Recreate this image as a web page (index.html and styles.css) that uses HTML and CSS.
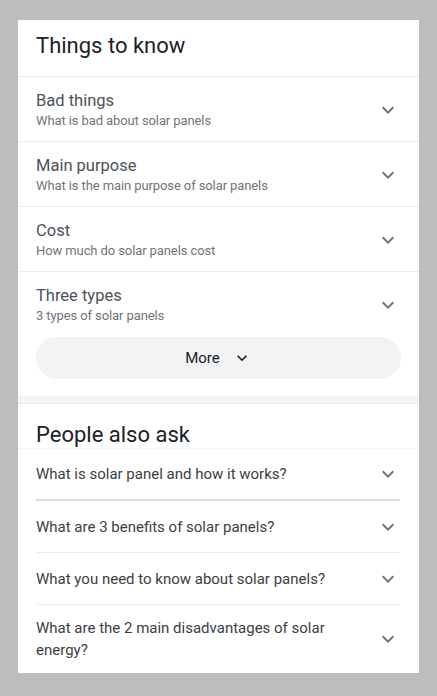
FILE: index.html
```html
<!DOCTYPE html>
<html lang="en">
<head>
<meta charset="utf-8">
<title>Things to know</title>
<link rel="stylesheet" href="styles.css">
</head>
<body>
<div class="card">
  <section class="ttk">
    <h2 class="sec-title ttk-title">Things to know</h2>
    <div class="item">
      <div class="item-text">
        <div class="item-title">Bad things</div>
        <div class="item-sub">What is bad about solar panels</div>
      </div>
      <svg class="chev" viewBox="0 0 24 24" width="24" height="24"><path d="M16.59 8.59L12 13.17 7.41 8.59 6 10l6 6 6-6z"/></svg>
    </div>
    <div class="item">
      <div class="item-text">
        <div class="item-title">Main purpose</div>
        <div class="item-sub">What is the main purpose of solar panels</div>
      </div>
      <svg class="chev" viewBox="0 0 24 24" width="24" height="24"><path d="M16.59 8.59L12 13.17 7.41 8.59 6 10l6 6 6-6z"/></svg>
    </div>
    <div class="item">
      <div class="item-text">
        <div class="item-title">Cost</div>
        <div class="item-sub">How much do solar panels cost</div>
      </div>
      <svg class="chev" viewBox="0 0 24 24" width="24" height="24"><path d="M16.59 8.59L12 13.17 7.41 8.59 6 10l6 6 6-6z"/></svg>
    </div>
    <div class="item item-last">
      <div class="item-text">
        <div class="item-title">Three types</div>
        <div class="item-sub">3 types of solar panels</div>
      </div>
      <svg class="chev" viewBox="0 0 24 24" width="24" height="24"><path d="M16.59 8.59L12 13.17 7.41 8.59 6 10l6 6 6-6z"/></svg>
    </div>
    <div class="more-wrap">
      <div class="more">
        <span>More</span>
        <svg class="more-chev" viewBox="0 0 24 24" width="20" height="20"><path d="M16.59 8.59L12 13.17 7.41 8.59 6 10l6 6 6-6z"/></svg>
      </div>
    </div>
  </section>
  <div class="band"></div>
  <section class="paa">
    <h2 class="sec-title paa-title">People also ask</h2>
    <div class="q q-first">
      <span class="q-text">What is solar panel and how it works?</span>
      <svg class="chev" viewBox="0 0 24 24" width="24" height="24"><path d="M16.59 8.59L12 13.17 7.41 8.59 6 10l6 6 6-6z"/></svg>
    </div>
    <div class="q">
      <span class="q-text">What are 3 benefits of solar panels?</span>
      <svg class="chev" viewBox="0 0 24 24" width="24" height="24"><path d="M16.59 8.59L12 13.17 7.41 8.59 6 10l6 6 6-6z"/></svg>
    </div>
    <div class="q">
      <span class="q-text">What you need to know about solar panels?</span>
      <svg class="chev" viewBox="0 0 24 24" width="24" height="24"><path d="M16.59 8.59L12 13.17 7.41 8.59 6 10l6 6 6-6z"/></svg>
    </div>
    <div class="q q-last">
      <span class="q-text">What are the 2 main disadvantages of solar energy?</span>
      <svg class="chev" viewBox="0 0 24 24" width="24" height="24"><path d="M16.59 8.59L12 13.17 7.41 8.59 6 10l6 6 6-6z"/></svg>
    </div>
  </section>
</div>
</body>
</html>
```

FILE: styles.css
```css
* { box-sizing: border-box; }

html, body {
  margin: 0;
  padding: 0;
}

body {
  background: #bdbdbd;
  font-family: Roboto, "Liberation Sans", Arial, sans-serif;
  padding: 20px 18px 0;
}

.card {
  background: #ffffff;
  width: 401px;
}

.sec-title {
  margin: 0;
  font-weight: 400;
  font-size: 22px;
  color: #202124;
}

.ttk-title {
  height: 57px;
  padding: 12px 18px 0;
  line-height: 28px;
  border-bottom: 1px solid #ebebeb;
}

.item {
  display: flex;
  align-items: center;
  padding: 13px 19px 11px 18px;
  border-bottom: 1px solid #ebebeb;
}

.item-last {
  border-bottom: none;
  padding-bottom: 0;
}

.item-text {
  flex: 1;
  min-width: 0;
}

.item-title {
  font-size: 16.5px;
  line-height: 22px;
  color: #4d5156;
}

.item-sub {
  font-size: 13px;
  letter-spacing: -0.1px;
  line-height: 18px;
  color: #70757a;
}

.chev {
  flex: none;
  fill: #70757a;
}

.more-wrap {
  padding: 12px 18px 17px;
}

.more {
  height: 42px;
  border-radius: 21px;
  background: #f1f3f4;
  display: flex;
  align-items: center;
  justify-content: center;
  gap: 12px;
  font-size: 15px;
  color: #202124;
}

.more-chev {
  fill: #202124;
}

.band {
  height: 8px;
  background: #f1f3f4;
  border-bottom: 1px solid #e8eaed;
}

.paa-title {
  padding: 17px 18px 0;
  height: 45px;
  line-height: 27px;
  border-bottom: 1px solid #f5f5f5;
}

.q {
  display: flex;
  align-items: center;
  min-height: 52px;
  padding: 12px 0;
  margin: 0 19px 0 18px;
  border-bottom: 1px solid #ebebeb;
  gap: 16px;
}

.q-first {
  border-bottom: 2px solid #dadce0;
}

.q-last {
  border-bottom: none;
  min-height: 50px;
}

.q-text {
  flex: 1;
  font-size: 15px;
  line-height: 22px;
  color: #3c4043;
}
```
